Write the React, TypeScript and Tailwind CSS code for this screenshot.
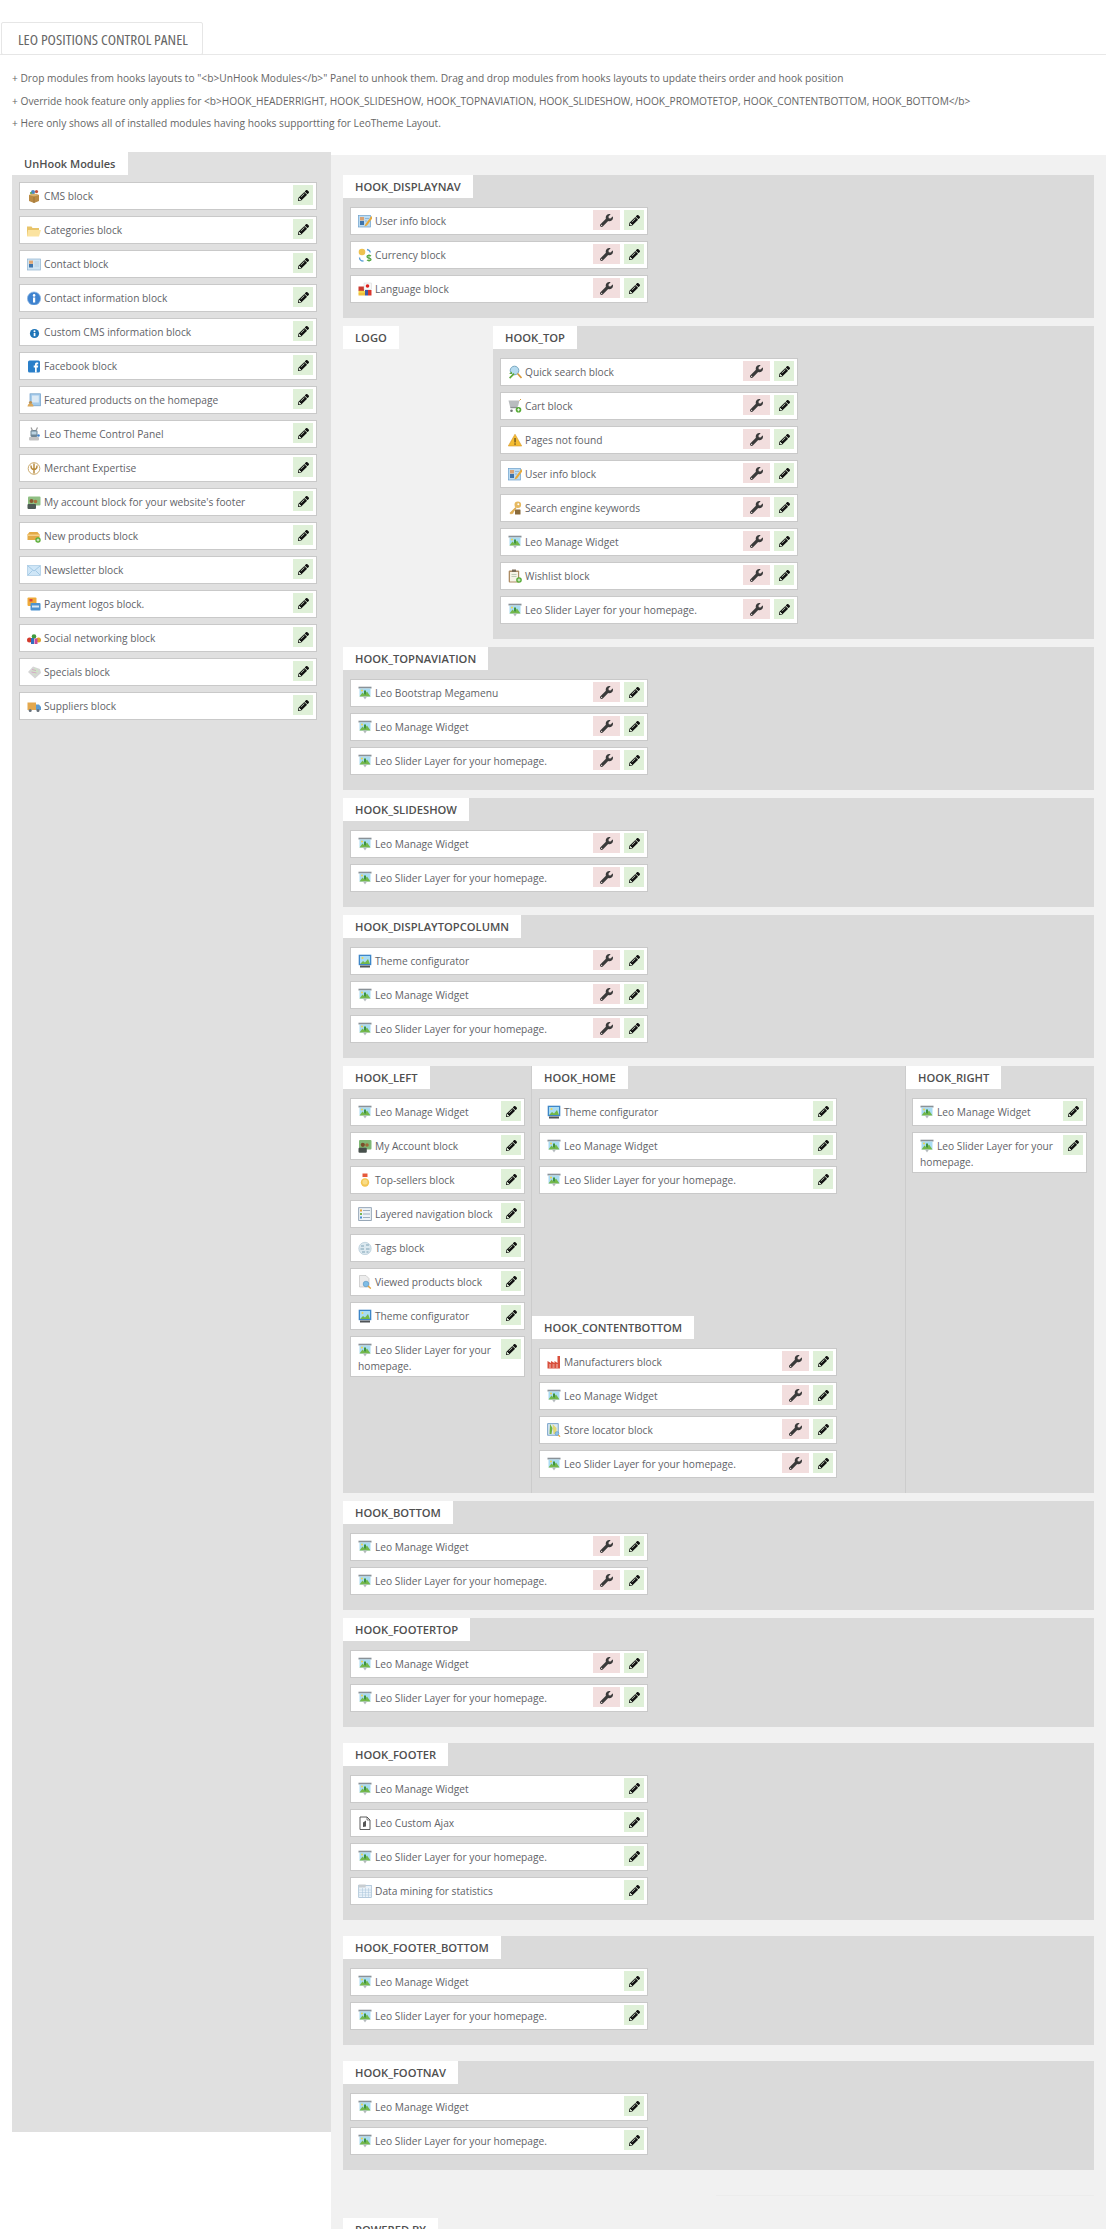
import React from "react";
import { FaWrench, FaPencilAlt } from "react-icons/fa";

const I: Record<string, React.ReactNode> = {
  cms: (<><path d="M2 6l5-1.500L12 6v6l-5 2-5-2z" fill="#b98a45"/><path d="M2 6l5 1.600L12 6 7 4.500z" fill="#d8b26e"/><path d="M7 7.600V14" stroke="#8a6630" strokeWidth=".6"/><circle cx="6" cy="3" r="2" fill="#4a86c5"/><circle cx="9.500" cy="2.600" r="1.600" fill="#c0503a"/><circle cx="4" cy="4" r="1.100" fill="#5aa050"/></>),
  folder: (<><path d="M0 3.500h4.500l1 1.500H12v8H0z" fill="#e8c46a"/><path d="M1 7h13l-2 6.500H0z" fill="#fbe3a0"/></>),
  contact: (<><rect x="0.500" y="2" width="13" height="11" fill="#cfe4f3" stroke="#8fb2cf" strokeWidth=".7"/><rect x="2" y="3.600" width="4" height="3.200" fill="#e0a672"/><rect x="2" y="7" width="4" height="3.500" fill="#3e74ab"/><path d="M7.500 5h4.500M7.500 7h4.500M7.500 9h4.500" stroke="#a8c6dc" strokeWidth=".7"/></>),
  infoBig: (<><circle cx="7" cy="7.500" r="6.600" fill="#3f83cf" stroke="#8db6e2" strokeWidth=".7"/><rect x="6" y="6.500" width="2.200" height="5" fill="#fff"/><circle cx="7.100" cy="4.400" r="1.300" fill="#fff"/></>),
  info: (<><circle cx="7.500" cy="8.500" r="4.600" fill="#1f75b8"/><rect x="6.700" y="8" width="1.700" height="3.200" fill="#fff"/><circle cx="7.500" cy="6.200" r="1" fill="#fff"/></>),
  fb: (<><rect x="1" y="1.500" width="12" height="12" rx="1.500" fill="#2a7fc9"/><path d="M8 13.500V8.400H6.700V6.600H8V5.400c0-1.400.8-2 2-2h1.200v1.800h-.8c-.5 0-.7.2-.7.7v.7h1.500l-.2 1.800H9.700v5.100z" fill="#fff"/></>),
  featured: (<><rect x="3" y="0.800" width="10.500" height="12" fill="#a5cbea" stroke="#6e9dc8" strokeWidth=".7"/><rect x="5" y="2.500" width="6.800" height="7" fill="#dceaf5"/><circle cx="3.500" cy="9.500" r="1.600" fill="#b98f52"/><path d="M.5 13.500c.3-2.400 1.500-3 3-3s2.700.6 3 3z" fill="#dca95b"/></>),
  theme2: (<><rect x="3.500" y="3" width="7" height="7" rx="1.500" fill="#6f8796"/><path d="M4 0.500l1.500 3M10.500 0.500l-1.500 3" stroke="#9a9a9a" strokeWidth="1.200"/><rect x="4.500" y="4.500" width="5" height="3" fill="#bcd4e2"/><rect x="2" y="10" width="10" height="3.500" rx="1" fill="#c3c3c3"/><circle cx="11.500" cy="8.500" r="1.300" fill="#3f83cf"/></>),
  merchant: (<><circle cx="7" cy="7.500" r="5.800" fill="none" stroke="#caa96b" strokeWidth="1"/><path d="M7 2.500v10M4 4.500c0 3 1.500 4 3 4s3-1 3-4" fill="none" stroke="#b98c3f" strokeWidth="1.500"/></>),
  account: (<><rect x="1" y="1.500" width="12.500" height="9" rx="1" fill="#8fbf83"/><circle cx="4.500" cy="6" r="2" fill="#8a5a30"/><circle cx="8.500" cy="6.500" r="1.800" fill="#a9723d"/><rect x="0.500" y="9" width="8.500" height="5" rx="1" fill="#4d5a55"/></>),
  newp: (<><path d="M0.500 5.500l2-2.500h8l2 2.500V11H0.500z" fill="#e3aa46"/><path d="M0.500 5.500h12v1.500h-12z" fill="#f6d088"/><circle cx="11" cy="11" r="2.700" fill="#5cae38"/><path d="M11 9.600v2.800M9.600 11h2.800" stroke="#fff" strokeWidth=".8"/></>),
  mail: (<><rect x="0.500" y="2.500" width="13" height="10" fill="#cfe6f7" stroke="#a6c9e3" strokeWidth=".7"/><path d="M1 3l6 5 6-5M1 12l4.500-4.500M13 12L8.500 7.500" fill="none" stroke="#8fbbdc" strokeWidth=".7"/></>),
  pay: (<><rect x="0.500" y="0.500" width="9" height="8.500" rx="1" fill="#eeaa3a"/><rect x="2.500" y="2" width="3" height="2.500" fill="#d9453a"/><rect x="3.500" y="6" width="10" height="7.500" rx="1" fill="#4b92cf"/><rect x="5" y="8.500" width="7" height="2" fill="#d8e8f4"/></>),
  social: (<><circle cx="2.500" cy="9" r="2.500" fill="#d33a2c"/><circle cx="7" cy="5.500" r="2.300" fill="#3f9b3c"/><circle cx="11.500" cy="9" r="2.500" fill="#e4a527"/><rect x="4" y="7" width="3" height="6" fill="#2f6fc0"/><rect x="7.500" y="7.500" width="3" height="5.500" fill="#c84a96"/></>),
  specials: (<><path d="M1 7l5-5.500L13 4l1 4-6 5.500z" fill="#d5d5d5"/><path d="M4 5l5-2 2.500 3L8 11z" fill="#cfe3c8"/><path d="M5 4.500l4 1M4.500 7l5 1" stroke="#d699c4" strokeWidth=".8"/></>),
  truck: (<><rect x="0.500" y="3.500" width="8.500" height="7.500" fill="#e3a84e"/><path d="M9 5.500h3l2 2.500v3H9z" fill="#5d9bd0"/><circle cx="3.200" cy="11.500" r="1.500" fill="#66707a"/><circle cx="11" cy="11.500" r="1.500" fill="#66707a"/></>),
  widget: (<><rect x="0.500" y="0.700" width="13" height="1.800" fill="#8a9298"/><rect x="1.500" y="2.500" width="11" height="8" fill="#a9dcf3"/><path d="M1.500 10.500l3-4 2 2 2.500-3 3.500 5z" fill="#74b84a"/><rect x="6" y="4.500" width="2" height="4" fill="#3e9340"/><circle cx="4" cy="4.500" r="1" fill="#f2d34c"/><path d="M5 10.500h4L7 13.500z" fill="#b4b9bd"/></>),
  my: (<><rect x="1" y="1" width="12.500" height="9.500" rx="1" fill="#7fb874"/><circle cx="4.800" cy="5.800" r="2.100" fill="#7a4f2b"/><circle cx="9" cy="6" r="1.800" fill="#a06b37"/><rect x="0.500" y="8.800" width="8.300" height="5" rx="1" fill="#47504c"/></>),
  medal: (<><path d="M4.500 0.500h5V4h-5z" fill="#e6593b"/><circle cx="7" cy="9.500" r="4.200" fill="#f3c552"/><circle cx="7" cy="9" r="2.600" fill="#f9dc85"/></>),
  layered: (<><rect x="0.700" y="0.700" width="12.600" height="12.800" fill="#eef3f7" stroke="#7f93a6" strokeWidth=".8"/><rect x="2" y="2.500" width="2" height="2" fill="#e8a23a"/><rect x="2" y="6" width="2" height="2" fill="#73b653"/><rect x="2" y="9.500" width="2" height="2" fill="#4a8fd0"/><path d="M5 3.500h7M5 7h7M5 10.500h7" stroke="#96a9b8" strokeWidth=".9"/></>),
  tags: (<><circle cx="7" cy="7.500" r="6.200" fill="#dbe8ef" stroke="#a9c2d1" strokeWidth=".6"/><path d="M3 5h3M8 4h3M2.500 8H6M8 8h3.500M4 11h3M8.500 11h2" stroke="#7ea1b6" strokeWidth="1.100"/></>),
  viewed: (<><path d="M1.500 0.500H8l3 3V12H1.500z" fill="#ececec" stroke="#bbb" strokeWidth=".6"/><circle cx="8" cy="9" r="2.800" fill="#7ebde6" stroke="#5691bd" strokeWidth=".6"/><path d="M10 11l2.800 2.600" stroke="#e6a53c" strokeWidth="1.300"/></>),
  theme: (<><rect x="0.700" y="0.700" width="12.600" height="10.500" fill="#3e86c8"/><rect x="2" y="2" width="10" height="8" fill="#a9dcf3"/><path d="M2 10l3-3 2 1.500L10 5l2 5z" fill="#71b74a"/><circle cx="4.500" cy="4" r="1" fill="#f2d34c"/><rect x="2" y="11.500" width="10" height="2" fill="#4f5356"/></>),
  mfr: (<><path d="M0.500 13.500V6L4 8V6l3.500 2V6l3 2V1H13v12.500z" fill="#d84f3c"/><path d="M2 10h2M5.500 10h2M9 10h2M2 12h2M5.500 12h2M9 12h2" stroke="#f6d0c8" strokeWidth=".9"/></>),
  store: (<><rect x="0.700" y="0.700" width="10.500" height="11.500" fill="#dbe9f4" stroke="#5d8fbe" strokeWidth=".8"/><path d="M3 1l2.500 4-1 6h-2z" fill="#6cb346"/><path d="M5.500 1l4 4v6h-3z" fill="#e3d773"/><circle cx="10" cy="10.500" r="1.900" fill="#8fc5ea" stroke="#5d8fbe" strokeWidth=".5"/><path d="M11.300 12l1.800 1.700" stroke="#e6a53c" strokeWidth="1.100"/></>),
  ajax: (<><path d="M2 1h7l3 3v9.500H2z" fill="#fff" stroke="#4b4b4b" strokeWidth=".9"/><path d="M9 1v3h3" fill="none" stroke="#4b4b4b" strokeWidth=".7"/><path d="M5 11V6.500L8 4.500v6z" fill="#555"/></>),
  stats: (<><rect x="0.700" y="1.500" width="12.600" height="12" fill="#eaf2f9" stroke="#9bb7cf" strokeWidth=".7"/><rect x="0.700" y="0.500" width="7" height="3" fill="#c8cdd1"/><path d="M1 6h12M1 8.500h12M1 11h12M4.500 4v9M7.500 4v9M10.500 4v9" stroke="#a9c4da" strokeWidth=".5"/></>),
  userinfo: (<><rect x="0.500" y="1.500" width="12" height="11.500" fill="#bcdcf3" stroke="#6b9fcb" strokeWidth=".7"/><rect x="2" y="3" width="4" height="3.500" fill="#d9a273"/><rect x="2" y="7" width="4" height="4" fill="#3e74ab"/><path d="M7 4.500h4M7 7h2" stroke="#7ea8c9" strokeWidth=".7"/><path d="M13.500 2l-6 8-1 2.500 2.500-1 5.500-7.500z" fill="#e8aa3a"/></>),
  currency: (<><circle cx="4" cy="4" r="3.300" fill="#eec14f"/><path d="M1.500 9.500c0 2 1.500 3.500 4 3.500M9 1.500c2 .3 3 1.400 3.300 3" fill="none" stroke="#5c9fd6" strokeWidth="1.300"/><path d="M11 6.500v7" stroke="#57a745" strokeWidth=".9"/><path d="M13 8c-1-.8-4-.8-4 .8s4 1 4 2.600-3 1.300-4 .5" fill="none" stroke="#57a745" strokeWidth="1.300"/></>),
  lang: (<><rect x="0.500" y="4.500" width="5.500" height="4.500" fill="#c93a30"/><rect x="6" y="1" width="7.500" height="6.500" fill="#f7f7f7" stroke="#ccc" strokeWidth=".4"/><circle cx="9.500" cy="4" r="1.800" fill="#e0201e"/><rect x="0.500" y="8.800" width="6.500" height="2.500" fill="#f2d34c"/><rect x="0.500" y="11" width="6.500" height="2.500" fill="#f0bf3a"/><rect x="7" y="8" width="3" height="5.500" fill="#3d58a8"/><rect x="10" y="8" width="3.500" height="5.500" fill="#d9362e"/></>),
  search: (<><circle cx="6.500" cy="5.500" r="4.300" fill="#b5dbf0" stroke="#78a7bf" strokeWidth="1"/><path d="M9.500 8.500l4 4.500" stroke="#d89a3b" strokeWidth="1.700"/><path d="M1 12.500L5.500 8l1.200 1.200-4.500 4.600z" fill="#5ea93a"/><path d="M1 9h3V6.500z" fill="#5ea93a"/></>),
  cart: (<><path d="M0.500 1.500h11l-1.500 6H2z" fill="#b9bcbe"/><path d="M2 7.500h7.500v1.700h-7z" fill="#8e9295"/><circle cx="3.500" cy="11.800" r="1.300" fill="#6f7376"/><circle cx="10.500" cy="10.800" r="2.800" fill="#56ab35"/><path d="M10.500 9.300v3M9 10.800h3" stroke="#fff" strokeWidth=".8"/><path d="M11.500 1.500L13 0" stroke="#d89a3b" strokeWidth="1"/></>),
  warn: (<><path d="M7 1.200L13.700 13H.3z" fill="#f4bd32" stroke="#d5962a" strokeWidth=".6"/><rect x="6.300" y="5" width="1.500" height="4.500" fill="#7a5a1f"/><rect x="6.300" y="10.300" width="1.500" height="1.500" fill="#7a5a1f"/></>),
  key: (<><circle cx="9.800" cy="3.800" r="3.300" fill="#e6b960"/><circle cx="10.300" cy="3.300" r="1" fill="#fff"/><path d="M7.500 6l-6 6L3 13.500l1-1 1 .5.500-1.500L8.500 7z" fill="#dfae55"/><rect x="7" y="8.500" width="5.500" height="5" rx=".5" fill="#8a6a3a"/></>),
  wish: (<><rect x="0.700" y="1.500" width="10.500" height="12" rx="1" fill="#ad8c64"/><rect x="2" y="3" width="8" height="9.500" fill="#f6f3e7"/><rect x="4" y="0.500" width="4" height="2.500" fill="#7a6b58"/><path d="M3.500 5.500h5M3.500 7.500h5" stroke="#a6b7a2" strokeWidth=".7"/><circle cx="11" cy="11" r="2.800" fill="#56ab35"/><path d="M11 9.500v3M9.500 11h3" stroke="#fff" strokeWidth=".8"/></>),
};

type Item = [string, string];
const W: Item = ["widget", "Leo Manage Widget"];
const S: Item = ["widget", "Leo Slider Layer for your homepage."];
const T: Item = ["theme", "Theme configurator"];

const unhook: Item[] = [
  ["cms", "CMS block"],
  ["folder", "Categories block"],
  ["contact", "Contact block"],
  ["infoBig", "Contact information block"],
  ["info", "Custom CMS information block"],
  ["fb", "Facebook block"],
  ["featured", "Featured products on the homepage"],
  ["theme2", "Leo Theme Control Panel"],
  ["merchant", "Merchant Expertise"],
  ["account", "My account block for your website's footer"],
  ["newp", "New products block"],
  ["mail", "Newsletter block"],
  ["pay", "Payment logos block."],
  ["social", "Social networking block"],
  ["specials", "Specials block"],
  ["truck", "Suppliers block"],
];

function Row({ item, wrench, narrow, cls }: { item: Item; wrench?: boolean; narrow?: boolean; cls?: string }) {
  return (
    <div className={`mb-[6px] min-h-[28px] border border-[#c9c9c9] bg-white pb-[2px] pl-[7px] pr-[3px] pt-[5px] text-[10.2px] leading-[16px] text-[#5f6368] ${narrow ? "w-[175px]" : "w-[298px]"} ${cls ?? "ml-[7px]"}`}>
      <div className="float-right -mt-[3px] flex gap-[4px]">
        {wrench && (
          <span className="flex h-[20px] w-[27px] items-center justify-center bg-[#f2dede] text-[#3a3a3a]">
            <FaWrench size={13} />
          </span>
        )}
        <span className="flex h-[20px] w-[20px] items-center justify-center bg-[#dff0d8] text-[#111]">
          <FaPencilAlt size={11} />
        </span>
      </div>
      <svg viewBox="0 0 14 14" className="mr-[3px] inline-block h-[14px] w-[14px] align-[-3px]">
        {I[item[0]]}
      </svg>
      {item[1]}
    </div>
  );
}

function Tab({ title }: { title: string }) {
  return (
    <div className="h-[23px] w-fit bg-white px-[12px] text-[11.2px] font-semibold leading-[23px] text-[#4f4f4f]">
      {title}
    </div>
  );
}

function Hook({ title, items, wrench, narrow, rowCls, className }: { title: string; items: Item[]; wrench?: boolean; narrow?: boolean; rowCls?: string; className?: string }) {
  return (
    <div className={className}>
      <Tab title={title} />
      <div className="pb-[9px] pt-[9px]">
        {items.map((it, i) => (
          <Row key={i} item={it} wrench={wrench} narrow={narrow} cls={rowCls} />
        ))}
      </div>
    </div>
  );
}

export default function App() {
  const font = { fontFamily: '"Open Sans", "Liberation Sans", sans-serif' };
  return (
    <div style={font} className="h-[2229px] overflow-hidden bg-white">
      <div className="border-b border-[#e8e8e8] pl-px pt-[22px]">
        <div className="-mb-px h-[33px] w-[202px] rounded-[2px] border border-[#e6e6e6] bg-white pl-[16px] text-[15.3px] leading-[32px] text-[#666] [font-stretch:75%]">
          LEO POSITIONS CONTROL PANEL
        </div>
      </div>
      <div className="pl-[12px] pt-[15px] text-[10.2px] leading-[16px] text-[#666]">
        <p className="mb-[7px]">+ Drop modules from hooks layouts to "&lt;b&gt;UnHook Modules&lt;/b&gt;" Panel to unhook them. Drag and drop modules from hooks layouts to update theirs order and hook position</p>
        <p className="mb-[6px]">+ Override hook feature only applies for &lt;b&gt;HOOK_HEADERRIGHT, HOOK_SLIDESHOW, HOOK_TOPNAVIATION, HOOK_SLIDESHOW, HOOK_PROMOTETOP, HOOK_CONTENTBOTTOM, HOOK_BOTTOM&lt;/b&gt;</p>
        <p>+ Here only shows all of installed modules having hooks supportting for LeoTheme Layout.</p>
      </div>
      <div className="mt-[21px] flex items-start">
        <aside className="ml-[12px] h-[1980px] w-[319px] shrink-0 bg-[#e0e0e0]">
          <div className="h-[23px] w-[116px] bg-white pl-[12px] text-[11px] font-semibold leading-[23px] text-[#4f4f4f]">UnHook Modules</div>
          <div className="pt-[7px]">
            {unhook.map((it, i) => (
              <Row key={i} item={it} />
            ))}
          </div>
        </aside>
        <main className="mt-[3px] flex-1 bg-[#f1f1f1] pb-[40px] pl-[12px] pr-[12px] pt-[20px]">
          <Hook className="mb-[8px] bg-[#dadada]" title="HOOK_DISPLAYNAV" wrench items={[["userinfo", "User info block"], ["currency", "Currency block"], ["lang", "Language block"]]} />
          <div className="mb-[8px] flex">
            <div className="w-[150px] shrink-0"><Tab title="LOGO" /></div>
            <Hook className="flex-1 bg-[#dadada]" title="HOOK_TOP" wrench items={[["search", "Quick search block"], ["cart", "Cart block"], ["warn", "Pages not found"], ["userinfo", "User info block"], ["key", "Search engine keywords"], W, ["wish", "Wishlist block"], S]} />
          </div>
          <Hook className="mb-[8px] bg-[#dadada]" title="HOOK_TOPNAVIATION" wrench items={[["widget", "Leo Bootstrap Megamenu"], W, S]} />
          <Hook className="mb-[8px] bg-[#dadada]" title="HOOK_SLIDESHOW" wrench items={[W, S]} />
          <Hook className="mb-[8px] bg-[#dadada]" title="HOOK_DISPLAYTOPCOLUMN" wrench items={[T, W, S]} />
          <div className="mb-[8px] flex bg-[#dadada]">
            <Hook className="w-[189px] shrink-0 border-r border-[#cccccc]" title="HOOK_LEFT" narrow items={[W, ["my", "My Account block"], ["medal", "Top-sellers block"], ["layered", "Layered navigation block"], ["tags", "Tags block"], ["viewed", "Viewed products block"], T, S]} />
            <div className="flex-1">
              <Hook className="min-h-[250px]" title="HOOK_HOME" items={[T, W, S]} />
              <Hook title="HOOK_CONTENTBOTTOM" wrench items={[["mfr", "Manufacturers block"], W, ["store", "Store locator block"], S]} />
            </div>
            <Hook className="w-[189px] shrink-0 border-l border-[#cccccc]" title="HOOK_RIGHT" narrow rowCls="ml-[6px]" items={[W, S]} />
          </div>
          <Hook className="mb-[8px] bg-[#dadada]" title="HOOK_BOTTOM" wrench items={[W, S]} />
          <Hook className="mb-[16px] bg-[#dadada]" title="HOOK_FOOTERTOP" wrench items={[W, S]} />
          <Hook className="mb-[16px] bg-[#dadada]" title="HOOK_FOOTER" items={[W, ["ajax", "Leo Custom Ajax"], S, ["stats", "Data mining for statistics"]]} />
          <Hook className="mb-[16px] bg-[#dadada]" title="HOOK_FOOTER_BOTTOM" items={[W, S]} />
          <Hook className="bg-[#dadada]" title="HOOK_FOOTNAV" items={[W, S]} />
          <div className="ml-auto mt-[25px] w-[378px] border-t border-[#ececec]" />
          <div className="mt-[22px]"><Tab title="POWERED BY" /></div>
        </main>
      </div>
    </div>
  );
}
